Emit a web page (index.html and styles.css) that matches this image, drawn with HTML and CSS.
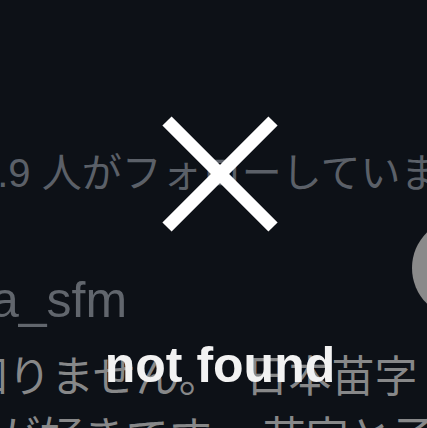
FILE: index.html
```html
<!DOCTYPE html>
<html lang="ja">
<head>
<meta charset="utf-8">
<title>not found</title>
<link rel="stylesheet" href="styles.css">
</head>
<body>
<main class="profile">
  <p class="followers">1.9 人がフォローしています</p>
  <div class="user-row">
    <span class="handle">a_sfm</span>
    <span class="avatar"></span>
  </div>
  <p class="bio"><span class="bio-line bio-first">知りません。&nbsp; 日本苗字</span><span class="bio-line bio-second">が好きです。 苗字と子</span></p>
</main>
<div class="overlay">
  <svg class="cross" width="120" height="120" viewBox="0 0 120 120" aria-hidden="true">
    <line x1="7" y1="7" x2="113" y2="113" stroke="#ffffff" stroke-width="13"/>
    <line x1="113" y1="7" x2="7" y2="113" stroke="#ffffff" stroke-width="13"/>
  </svg>
  <p class="message">not found</p>
</div>
</body>
</html>
```
FILE: styles.css
```css
html, body {
  margin: 0;
  padding: 0;
  width: 427px;
  height: 428px;
  overflow: hidden;
  background: #0d1117;
}

body {
  position: relative;
  font-family: "Liberation Sans", "Noto Sans CJK JP", sans-serif;
}

.profile {
  display: flex;
  flex-direction: column;
  padding-top: 153px;
  white-space: nowrap;
}

.followers {
  margin: 0 0 0 -25px;
  font-size: 40px;
  line-height: 40px;
  color: #5b6068;
}

.user-row {
  display: flex;
  justify-content: space-between;
  align-items: flex-start;
  margin-top: 25px;
  margin-right: -85px;
}

.handle {
  margin-top: 57px;
  margin-left: -9px;
  font-size: 50px;
  line-height: 50px;
  color: #61666d;
}

.avatar {
  width: 100px;
  height: 100px;
  border-radius: 50%;
  background: #8a8a8a;
  flex: none;
}

.bio {
  margin: 22px 0 0 0;
  font-size: 43px;
  line-height: 61px;
  color: #878889;
  display: flex;
  flex-direction: column;
}

.bio-first {
  margin-left: -35px;
}

.bio-second {
  margin-left: -3px;
}

.overlay {
  position: absolute;
  top: 0;
  left: 0;
  width: 427px;
  height: 428px;
  box-sizing: border-box;
  padding-top: 114px;
  padding-left: 13px;
  display: flex;
  flex-direction: column;
  align-items: center;
}

.cross {
  display: block;
}

.message {
  margin: 106px 0 0 0;
  font-size: 50px;
  line-height: 50px;
  font-weight: bold;
  color: #f2f2f2;
  white-space: nowrap;
}
```
